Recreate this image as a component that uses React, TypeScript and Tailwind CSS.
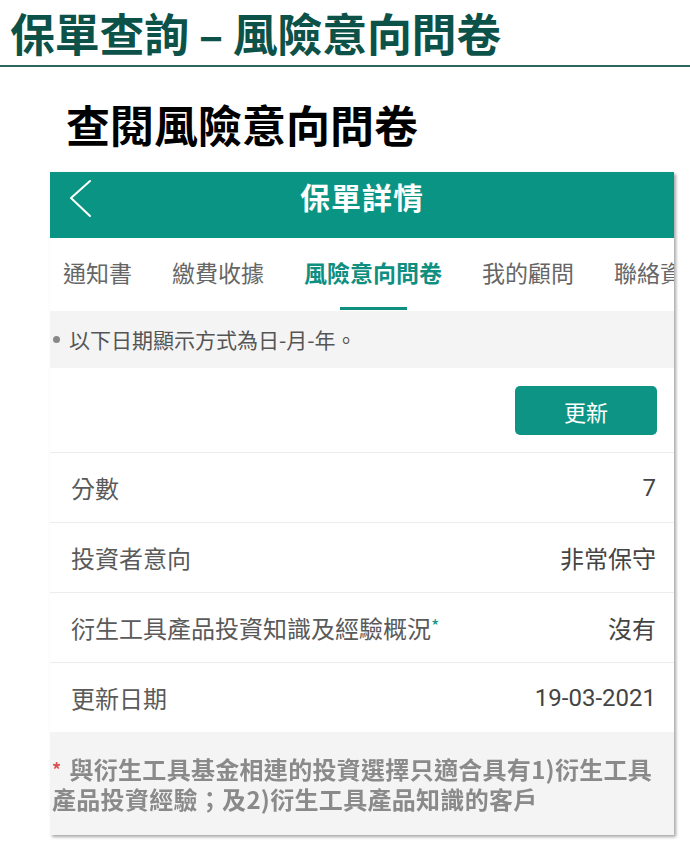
import React from "react";

const cjk = '"Noto Sans CJK TC", "Noto Sans", sans-serif';
const roboto = 'Roboto, "Noto Sans CJK TC", sans-serif';

function Row({ label, value, star, num }: { label: string; value: string; star?: boolean; num?: boolean }) {
  return (
    <div className="h-[70px] border-t border-[#ececec] flex items-center justify-between pl-[21px] pr-[18px]">
      <div className="text-[24px] text-[#5a5a5a] leading-none">
        {label}
        {star && <span className="text-[#0e9686] text-[18px] align-top">*</span>}
      </div>
      <div
        className="text-[24px] text-[#444] leading-none"
        style={num ? { fontFamily: roboto } : undefined}
      >
        {value}
      </div>
    </div>
  );
}

export default function App() {
  return (
    <div className="w-[690px] h-[852px] bg-white overflow-hidden" style={{ fontFamily: cjk }}>
      <div className="h-[65px] pl-[10px] flex items-center">
        <h1 className="text-[45px] font-bold leading-none text-[#0d5249] tracking-[-0.3px]">保單查詢 – 風險意向問卷</h1>
      </div>
      <div className="h-[2px] bg-[#2b6661]" />
      <div className="mt-[35px] ml-[66px] text-[44px] leading-[44px] font-bold text-black">查閱風險意向問卷</div>

      <div className="mt-[26px] ml-[50px] w-[624px] bg-white shadow-[2px_2px_3px_rgba(0,0,0,0.35)]">
        <div className="relative h-[66px] bg-[#0a9483] flex items-center justify-center">
          <svg className="absolute left-0 top-0" width="60" height="66" viewBox="0 0 60 66">
            <polyline points="40,9 21,26 40,44" fill="none" stroke="white" strokeWidth="2" strokeLinecap="round" strokeLinejoin="round" />
          </svg>
          <div className="text-[30px] font-bold text-white leading-none tracking-[1px] -mt-[18px]">保單詳情</div>
        </div>

        <div className="h-[73px] relative overflow-hidden flex items-center pl-[13px] gap-[40px] whitespace-nowrap text-[23px] text-[#666] leading-none">
          <span className="-mt-[4px]">通知書</span>
          <span className="-mt-[4px]">繳費收據</span>
          <span className="-mt-[4px] font-bold text-[#0f8f80]">風險意向問卷</span>
          <span className="-mt-[4px]">我的顧問</span>
          <span className="-mt-[4px]">聯絡資料</span>
          <span className="absolute left-[290px] bottom-[1px] w-[67px] h-[3px] bg-[#0e8f80]" />
        </div>

        <div className="h-[57px] bg-[#f4f4f4] flex items-center pl-[3px]">
          <span className="w-[7px] h-[7px] rounded-full bg-[#888] mr-[9px]" />
          <span className="text-[21px] text-[#555] leading-none">以下日期顯示方式為日-月-年。</span>
        </div>

        <div className="h-[84px] flex justify-end items-start pt-[18px] pr-[17px]">
          <button className="w-[142px] h-[49px] rounded-[5px] bg-[#0e9484] text-white text-[22px] leading-none flex items-center justify-center">
            更新
          </button>
        </div>

        <Row label="分數" value="7" num />
        <Row label="投資者意向" value="非常保守" />
        <Row label="衍生工具產品投資知識及經驗概況" value="沒有" star />
        <Row label="更新日期" value="19-03-2021" num />

        <div className="h-[103px] bg-[#f4f4f4] pt-[22px] pl-[2px] text-[24px] leading-[30px] font-bold text-[#8a8a8a] blur-[0.4px] tracking-[0.3px]">
          <span className="text-[#e05050] text-[18px] align-top mr-[8px]">*</span>與衍生工具基金相連的投資選擇只適合具有1)衍生工具
          <br />
          產品投資經驗；及2)衍生工具產品知識的客戶
        </div>
      </div>
    </div>
  );
}
